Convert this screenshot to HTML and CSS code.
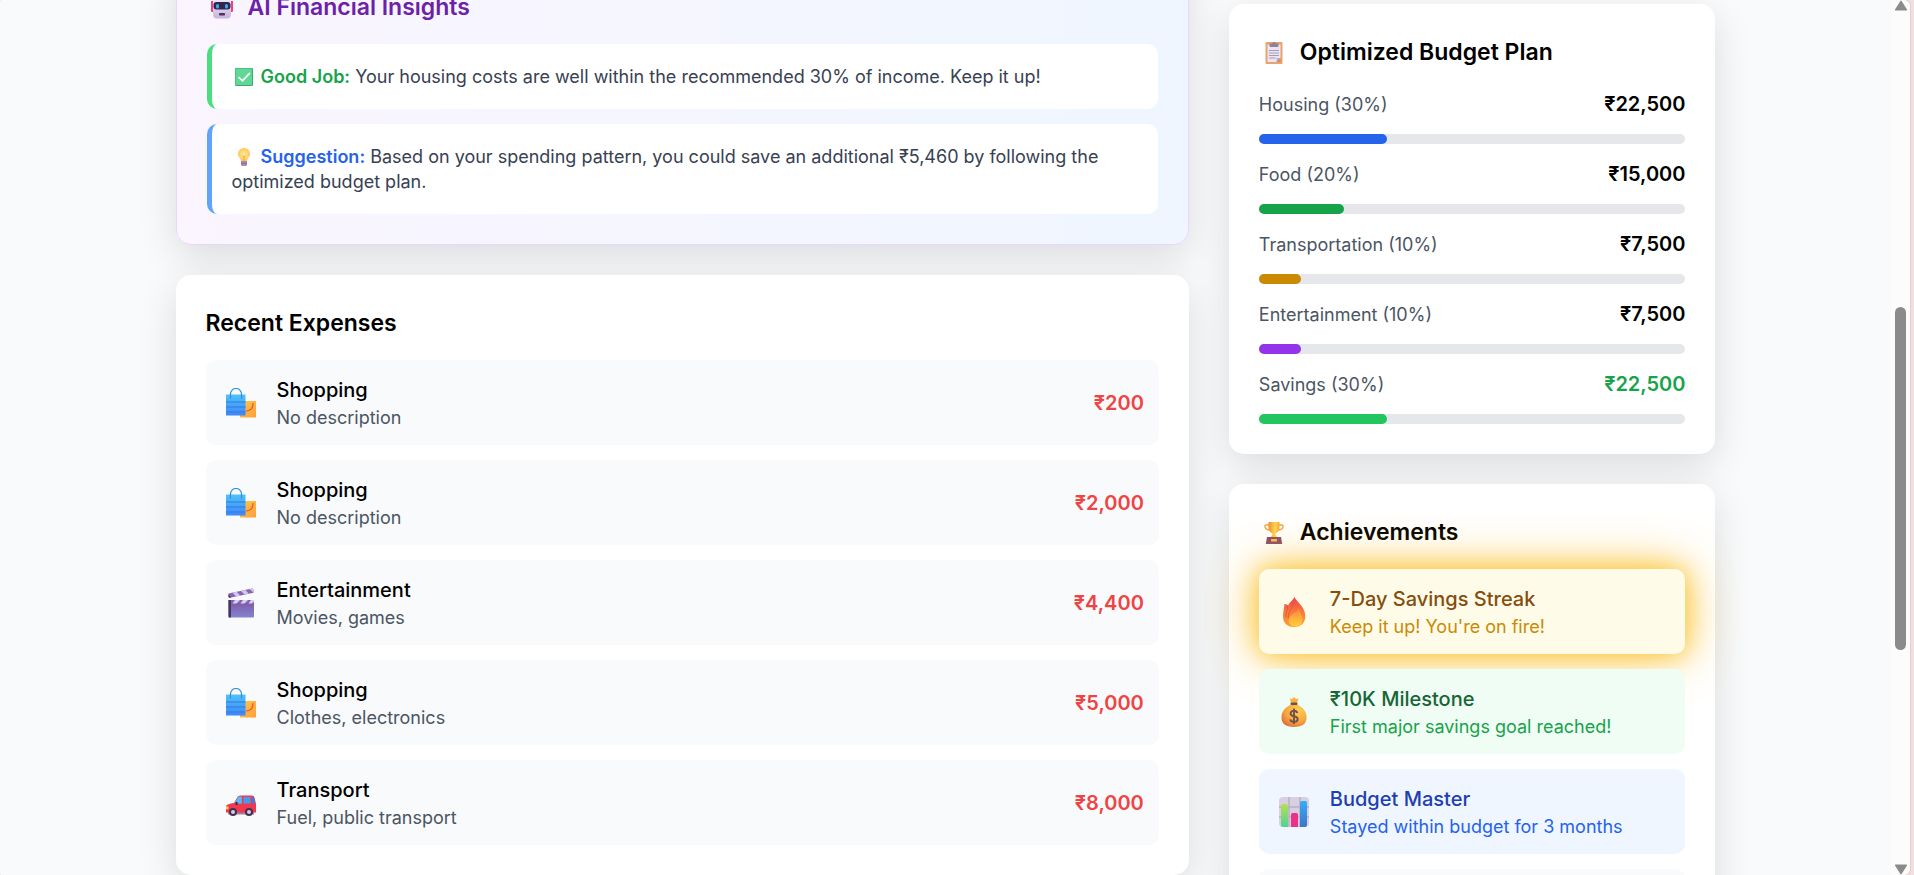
FILE: index.html
```html
<!DOCTYPE html>
<html lang="en">
<head>
<meta charset="utf-8">
<meta name="viewport" content="width=device-width, initial-scale=1">
<title>Budget Dashboard</title>
<link rel="stylesheet" href="styles.css">
</head>
<body>
<svg class="sprite" aria-hidden="true">
  <defs>
    <linearGradient id="g-blue" x1="0" y1="0" x2="0" y2="1"><stop offset="0" stop-color="#4fc3f9"/><stop offset="1" stop-color="#3f86fb"/></linearGradient>
    <linearGradient id="g-orange" x1="0" y1="0" x2="1" y2="1"><stop offset="0" stop-color="#ffc84a"/><stop offset="1" stop-color="#ff9f3a"/></linearGradient>
    <linearGradient id="g-clap" x1="0" y1="0" x2="0" y2="1"><stop offset="0" stop-color="#7a55a0"/><stop offset="1" stop-color="#8583d0"/></linearGradient>
    <linearGradient id="g-flame" x1="0" y1="0" x2="0" y2="1"><stop offset="0" stop-color="#ef3f4c"/><stop offset=".5" stop-color="#fb7a3c"/><stop offset="1" stop-color="#ff9a35"/></linearGradient>
    <linearGradient id="g-core" x1="0" y1="0" x2="0" y2="1"><stop offset="0" stop-color="#ff8a3a"/><stop offset="1" stop-color="#ffd03a"/></linearGradient>
    <radialGradient id="g-sack" cx=".65" cy=".3" r=".8"><stop offset="0" stop-color="#ffd257"/><stop offset=".6" stop-color="#f7a53e"/><stop offset="1" stop-color="#d96a3a"/></radialGradient>
    <linearGradient id="g-gold" x1="0" y1="0" x2="1" y2="0"><stop offset="0" stop-color="#f08a38"/><stop offset=".6" stop-color="#ffd750"/><stop offset="1" stop-color="#f5a93c"/></linearGradient>
    <linearGradient id="g-green" x1="0" y1="0" x2="0" y2="1"><stop offset="0" stop-color="#b5e053"/><stop offset="1" stop-color="#4fd391"/></linearGradient>
    <linearGradient id="g-bar" x1="0" y1="0" x2="0" y2="1"><stop offset="0" stop-color="#35aef5"/><stop offset="1" stop-color="#3f74c9"/></linearGradient>
    <linearGradient id="g-face" x1="0" y1="0" x2="0" y2="1"><stop offset="0" stop-color="#f3ecfa"/><stop offset="1" stop-color="#c9b4dc"/></linearGradient>
    <radialGradient id="g-bulb" cx=".5" cy=".5" r=".55"><stop offset="0" stop-color="#fff0a0"/><stop offset="1" stop-color="#ffc04a"/></radialGradient>
  </defs>
  <symbol id="i-bags" viewBox="0 0 30 30">
    <path d="M14 13h16v16.500H14z" fill="url(#g-orange)"/>
    <path d="M27 15c.3 5-2.500 8-7 8" fill="none" stroke="#e5533a" stroke-width="1.200"/>
    <path d="M0 6.500h19.500v21H0z" fill="url(#g-blue)"/>
    <path d="M0 14h19.500M0 19h19.500M0 24h19.500" stroke="#2f7ad9" stroke-width="1"/>
    <path d="M4.500 10.500V6a5.500 5.500 0 0 1 11 0v4.500" fill="none" stroke="#2d8fdb" stroke-width="1.200"/>
  </symbol>
  <symbol id="i-clapper" viewBox="0 0 30 30">
    <path d="M2.500 12h25.500v16.500a1 1 0 0 1-1 1H3.500a1 1 0 0 1-1-1z" fill="url(#g-clap)"/>
    <path d="M2.500 12H5v17.500H3.500a1 1 0 0 1-1-1z" fill="#46355c"/>
    <path d="M5 12h23v3.500H5z" fill="#8864ad"/>
    <path d="M9 12h5l-3.500 3.500h-4zM17 12h5l-3.500 3.500h-4zM25 12h3v1.500l-2 2h-3.500z" fill="#d8ccff"/>
    <path d="M2.500 5.500 26 .5q1.500 0 1.500 2v2.200L4 9.700q-1.500 0-1.500-1.500z" fill="#8864ad"/>
    <path d="m6.500 4.700 4.200-.9 3.600 3.600-4.300 1zM15 2.900l4.300-1 3.500 3.700-4.300.9zM23.400 1.100l2.600-.6q1.500 0 1.500 2v2z" fill="#d0c4fa"/>
    <path d="M2.500 6.200 5 9.300 4 9.700q-1.500 0-1.500-1.500z" fill="#46355c"/>
  </symbol>
  <symbol id="i-car" viewBox="0 0 30 30">
    <path d="M2 24h26v2.500H2z" fill="#a5829c"/>
    <path d="M0 18q1-2 8-3l3.500-6q.8-1.500 3-1.500H26q2 0 2.500 2L30 16v8.500H0z" fill="#f0384f"/>
    <path d="M8.500 15.200 12 9.500q.5-1 2-1h1.800v7.200z" fill="#54bdf8"/>
    <path d="M17.500 9h7v6.500h-7z" fill="#3f9df3"/>
    <path d="M26 9h1.200q.8 0 1 1l1 5.500H26z" fill="#3580dc"/>
    <path d="M9.500 14v3h2v-3z" fill="#35284a"/>
    <path d="M0 18.500h2.500v2.700H0z" fill="#ffd84a"/>
    <circle cx="7" cy="24" r="4" fill="#43304f"/><circle cx="7" cy="24" r="2" fill="#d8cbe8"/>
    <circle cx="23" cy="24" r="4" fill="#43304f"/><circle cx="23" cy="24" r="2" fill="#d8cbe8"/>
  </symbol>
  <symbol id="i-fire" viewBox="0 0 30 30">
    <path d="M15.500 0c1 4 10.800 9.500 10.800 19 0 7-4.500 11-11.300 11S4 26 4 19c0-4 1-7 1.500-12 1 0 2.500.5 3.500 1.500C10.500 5.500 14 3 15.500 0z" fill="url(#g-flame)"/>
    <path d="M8.500 8.500c.5 4-2 7-1.500 12M14 6c0 6-6 8-4.500 16" fill="none" stroke="#d9503f" stroke-width=".8"/>
    <path d="M20 12c1 5 4 7 3.800 11.500C23.500 27 20 29.500 16 29.500s-6.500-3-6.500-6.500C9.500 18 16 17 20 12z" fill="url(#g-core)"/>
  </symbol>
  <symbol id="i-sack" viewBox="0 0 30 30">
    <path d="M11 1.500 13 2l2-2 2 2 2.500-.5L18 6h-6z" fill="#fbb13f"/>
    <path d="M12 7.500h6c6 3 9.500 7 9.500 13s-4 9.500-12.500 9.500-12.500-3.500-12.500-9.500S6 10.500 12 7.500z" fill="url(#g-sack)"/>
    <rect x="11.500" y="5.500" width="7" height="2.500" rx="1" fill="#74504a"/>
    <path d="M18.500 16c-.5-1.700-1.800-2.300-3.500-2.300-2 0-3.500 1-3.500 2.700 0 4 7.200 1.600 7.200 5.600 0 1.800-1.700 2.900-3.700 2.900s-3.500-.9-3.800-2.600M15 11.500v15.500" fill="none" stroke="#74504a" stroke-width="1.900"/>
  </symbol>
  <symbol id="i-chart" viewBox="0 0 30 30">
    <rect width="30" height="30" rx="4" fill="#d8cfe2"/>
    <path d="M10 0v30M21 0v30M0 10h30M0 20h30" stroke="#b9b0c6" stroke-width="1.500"/>
    <path d="M2 8.500Q2 7 3.500 7h4Q9 7 9 8.500V30H4q-2 0-2-2z" fill="url(#g-green)"/>
    <path d="M12 17.500q0-1.500 1.500-1.500h4q1.500 0 1.500 1.500V30h-7z" fill="#ea3289"/>
    <path d="M21 5.500Q21 4 22.500 4h4Q28 4 28 5.500V28q0 2-2 2h-5z" fill="url(#g-bar)"/>
  </symbol>
  <symbol id="i-robot" viewBox="0 0 22 22">
    <path d="M0 4h3v11H1q-1 0-1-1zM19 4h3v10q0 1-1 1h-2z" fill="#f0407a"/>
    <path d="M2 3q0-3 3-3h12q3 0 3 3v14q0 4.500-4 4.500H6q-4 0-4-4.500z" fill="url(#g-face)"/>
    <rect x="2.500" y="5" width="17" height="7.500" rx="3" fill="#30264c"/>
    <rect x="5" y="7" width="3" height="4.500" rx="1.500" fill="#2fb0f5"/><rect x="14" y="7" width="3" height="4.500" rx="1.500" fill="#2fb0f5"/>
    <rect x="8" y="16" width="6" height="2.500" rx=".8" fill="#4a3560"/>
  </symbol>
  <symbol id="i-clip" viewBox="0 0 22 22">
    <rect x="2.500" width="17" height="22" rx="1" fill="#e9a36c"/>
    <path d="M4.500 2.500h13V16l-4 4h-9z" fill="#ece4f4"/>
    <path d="M17.500 16v4h-4z" fill="#cf8a5c"/><path d="m13.500 16 4 0-4 4z" fill="#bcaacb"/>
    <path d="M6 8.500h10M6 11h10M6 13.500h10M6 16h6.500" stroke="#948aa3" stroke-width=".8"/>
    <path d="M6.500 1.500H9q0-1.500 2-1.500t2 1.500h2.500V4q0 1-1 1h-7q-1 0-1-1z" fill="#8d8394"/>
  </symbol>
  <symbol id="i-trophy" viewBox="0 0 22 22">
    <path d="M6 3H3Q1.500 3 2 5q.8 3 5 3M16 3h3q1.500 0 1 2-.8 3-5 3" fill="none" stroke="#f3a43c" stroke-width="1.300"/>
    <path d="M5.500 0h11v5q0 5-4.200 6.500 0 3 2.700 4H7q2.700-1 2.700-4Q5.500 10 5.500 5z" fill="url(#g-gold)"/>
    <path d="M4 15h14l1.200 7H2.800z" fill="#8b4c6b"/><rect x="8" y="17" width="6" height="2.500" rx=".5" fill="#f6bd48"/>
  </symbol>
  <symbol id="i-check" viewBox="0 0 18 18">
    <rect width="18" height="18" rx="1" fill="#3fa873"/><rect x=".5" y=".5" width="16.500" height="16.500" fill="#5fd795"/>
    <path d="m4 9.500 3.500 3.300 7-7.500" fill="none" stroke="#fff" stroke-width="1.700" stroke-linecap="round"/>
  </symbol>
  <symbol id="i-bulb" viewBox="0 0 18 18">
    <path d="M9 0a6 6 0 0 1 6 6c0 3-2.700 4-3 7H6c-.3-3-3-4-3-7a6 6 0 0 1 6-6z" fill="url(#g-bulb)"/>
    <path d="M7.500 7.500 9 9l1.500-1.500M9 9v4" fill="none" stroke="#f0a238" stroke-width=".9"/>
    <path d="M6 13h6v3.500q0 1.500-1.500 1.500h-3Q6 18 6 16.500z" fill="#a78bb5"/><path d="M6 15.300h6" stroke="#7d6391" stroke-width=".8"/>
  </symbol>
</svg>

<div class="window">
  <main class="page">
    <div class="grid">
      <div class="column column-main">
        <section class="card card-insights">
          <h2 class="card-title title-purple"><svg class="title-icon"><use href="#i-robot"/></svg>AI Financial Insights</h2>
          <div class="insights">
            <p class="insight insight-good"><svg class="inline-icon"><use href="#i-check"/></svg> <strong>Good Job:</strong> Your housing costs are well within the recommended 30% of income. Keep it up!</p>
            <p class="insight insight-tip"><svg class="inline-icon"><use href="#i-bulb"/></svg> <strong>Suggestion:</strong> Based on your spending pattern, you could save an additional ₹5,460 by following the optimized budget plan.</p>
          </div>
        </section>

        <section class="card">
          <h2 class="card-title">Recent Expenses</h2>
          <ul class="rows">
            <li class="row"><svg class="row-icon"><use href="#i-bags"/></svg><div class="row-text"><p class="row-name">Shopping</p><p class="row-note">No description</p></div><span class="row-amount">₹200</span></li>
            <li class="row"><svg class="row-icon"><use href="#i-bags"/></svg><div class="row-text"><p class="row-name">Shopping</p><p class="row-note">No description</p></div><span class="row-amount">₹2,000</span></li>
            <li class="row"><svg class="row-icon"><use href="#i-clapper"/></svg><div class="row-text"><p class="row-name">Entertainment</p><p class="row-note">Movies, games</p></div><span class="row-amount">₹4,400</span></li>
            <li class="row"><svg class="row-icon"><use href="#i-bags"/></svg><div class="row-text"><p class="row-name">Shopping</p><p class="row-note">Clothes, electronics</p></div><span class="row-amount">₹5,000</span></li>
            <li class="row"><svg class="row-icon"><use href="#i-car"/></svg><div class="row-text"><p class="row-name">Transport</p><p class="row-note">Fuel, public transport</p></div><span class="row-amount">₹8,000</span></li>
          </ul>
        </section>
      </div>

      <div class="column column-side">
        <section class="card">
          <h2 class="card-title"><svg class="title-icon"><use href="#i-clip"/></svg>Optimized Budget Plan</h2>
          <div class="plan">
            <div class="plan-line"><span>Housing (30%)</span><strong>₹22,500</strong></div>
            <div class="bar"><div class="fill fill-blue" style="width:30%"></div></div>
            <div class="plan-line"><span>Food (20%)</span><strong>₹15,000</strong></div>
            <div class="bar"><div class="fill fill-green" style="width:20%"></div></div>
            <div class="plan-line"><span>Transportation (10%)</span><strong>₹7,500</strong></div>
            <div class="bar"><div class="fill fill-yellow" style="width:10%"></div></div>
            <div class="plan-line"><span>Entertainment (10%)</span><strong>₹7,500</strong></div>
            <div class="bar"><div class="fill fill-purple" style="width:10%"></div></div>
            <div class="plan-line"><span>Savings (30%)</span><strong class="saved">₹22,500</strong></div>
            <div class="bar"><div class="fill fill-lime" style="width:30%"></div></div>
          </div>
        </section>

        <section class="card">
          <h2 class="card-title"><svg class="title-icon"><use href="#i-trophy"/></svg>Achievements</h2>
          <ul class="rows">
            <li class="row badge-streak"><svg class="row-icon"><use href="#i-fire"/></svg><div class="row-text"><p class="row-name">7-Day Savings Streak</p><p class="row-note">Keep it up! You're on fire!</p></div></li>
            <li class="row badge-money"><svg class="row-icon"><use href="#i-sack"/></svg><div class="row-text"><p class="row-name">₹10K Milestone</p><p class="row-note">First major savings goal reached!</p></div></li>
            <li class="row badge-master"><svg class="row-icon"><use href="#i-chart"/></svg><div class="row-text"><p class="row-name">Budget Master</p><p class="row-note">Stayed within budget for 3 months</p></div></li>
            <li class="row badge-locked"></li>
          </ul>
        </section>
      </div>
    </div>
  </main>
  <div class="scrollbar" aria-hidden="true">
    <svg class="arrow" viewBox="0 0 12 10"><path d="M6 1 11 9H1z"/></svg>
    <div class="track"><div class="thumb"></div></div>
    <svg class="arrow" viewBox="0 0 12 10"><path d="M6 9 11 1H1z"/></svg>
  </div>
</div>
</body>
</html>
```
FILE: styles.css
```css
* { box-sizing: border-box; margin: 0; padding: 0; }

body {
  height: 100vh;
  overflow: hidden;
  padding-right: 4px;
  background: #f2e0e0;
  color: #000;
  font: 20px/30px Inter, "Noto Sans", sans-serif;
}

ul { list-style: none; }
.sprite { position: absolute; width: 0; height: 0; }

.window {
  display: flex;
  height: 100vh;
  overflow: hidden;
  border-radius: 2px 6px 6px 2px;
  background: #fcfcfc;
  box-shadow: 0 0 1px 1px #e3cfcf;
}

.page { flex: 1; min-width: 0; background: #f9fafb; }

.grid {
  display: grid;
  grid-template-columns: repeat(3, minmax(0, 1fr));
  gap: 40px;
  max-width: 1600px;
  margin: 0 auto;
  padding: 0 30px;
}

.column { display: flex; flex-direction: column; gap: 30px; }
.column-main { grid-column: span 2; margin-top: -42px; }
.column-side { margin-top: 4px; }

.card {
  padding: 30px;
  border-radius: 15px;
  background: #fff;
  box-shadow: 0 12px 38px rgba(0, 0, 0, 0.12);
}

.card-insights {
  border: 1px solid #e9d5ff;
  background: linear-gradient(to right, #faf5ff, #eff6ff);
}

.card-title {
  display: flex;
  align-items: center;
  margin-bottom: 18px;
  font-size: 23px;
  font-weight: 600;
  line-height: 37px;
}
.title-purple { color: #6b21a8; }
.title-icon { width: 22px; height: 22px; margin: 0 15px 0 4px; }

.insights { display: grid; gap: 15px; }
.insight {
  padding: 20px;
  border-left: 5px solid;
  border-radius: 10px;
  background: #fff;
  color: #374151;
  font-size: 18px;
  line-height: 25px;
}
.insight strong { font-weight: 600; }
.insight-good { border-color: #4ade80; }
.insight-good strong { color: #16a34a; }
.insight-tip { border-color: #60a5fa; }
.insight-tip strong { color: #2563eb; }
.inline-icon { width: 18px; height: 18px; margin: 0 3px 0 3px; vertical-align: -3px; }

.rows { display: grid; gap: 15px; }
.row {
  display: flex;
  align-items: center;
  min-height: 85px;
  padding: 15px;
  border-radius: 10px;
  background: #f9fafb;
}
.row-icon { flex: none; width: 30px; height: 30px; margin: 0 21px 0 5px; }
.row-text { flex: 1; }
.row-name { font-weight: 500; }
.row-note { color: #4b5563; font-size: 18px; line-height: 25px; }
.row-amount { color: #ef4444; font-weight: 600; }

.plan { display: grid; gap: 15px; }
.plan-line { display: flex; justify-content: space-between; align-items: center; }
.plan-line span { color: #4b5563; font-size: 18px; line-height: 25px; }
.plan-line strong { font-weight: 600; }
.plan-line .saved { color: #16a34a; }
.bar { height: 10px; border-radius: 5px; background: #e5e7eb; }
.fill { height: 100%; border-radius: 5px; }
.fill-blue { background: #2563eb; }
.fill-green { background: #16a34a; }
.fill-yellow { background: #ca8a04; }
.fill-purple { background: #9333ea; }
.fill-lime { background: #22c55e; }

.badge-streak { background: #fefce8; color: #854d0e; box-shadow: 0 0 25px rgba(251, 191, 36, 0.8), 0 0 50px rgba(251, 191, 36, 0.8); }
.badge-streak .row-note { color: #ca8a04; }
.badge-money { background: #f0fdf4; color: #166534; }
.badge-money .row-note { color: #16a34a; }
.badge-master { background: #eff6ff; color: #1e40af; }
.badge-master .row-note { color: #2563eb; }

.scrollbar {
  display: flex;
  flex-direction: column;
  align-items: center;
  width: 19px;
}
.arrow { width: 14px; height: 11px; fill: #8b8b8b; stroke: #8b8b8b; stroke-linejoin: round; }
.track { flex: 1; width: 11px; padding-top: 296px; }
.thumb { height: 343px; border-radius: 6px; background: #8b8b8b; }
```
